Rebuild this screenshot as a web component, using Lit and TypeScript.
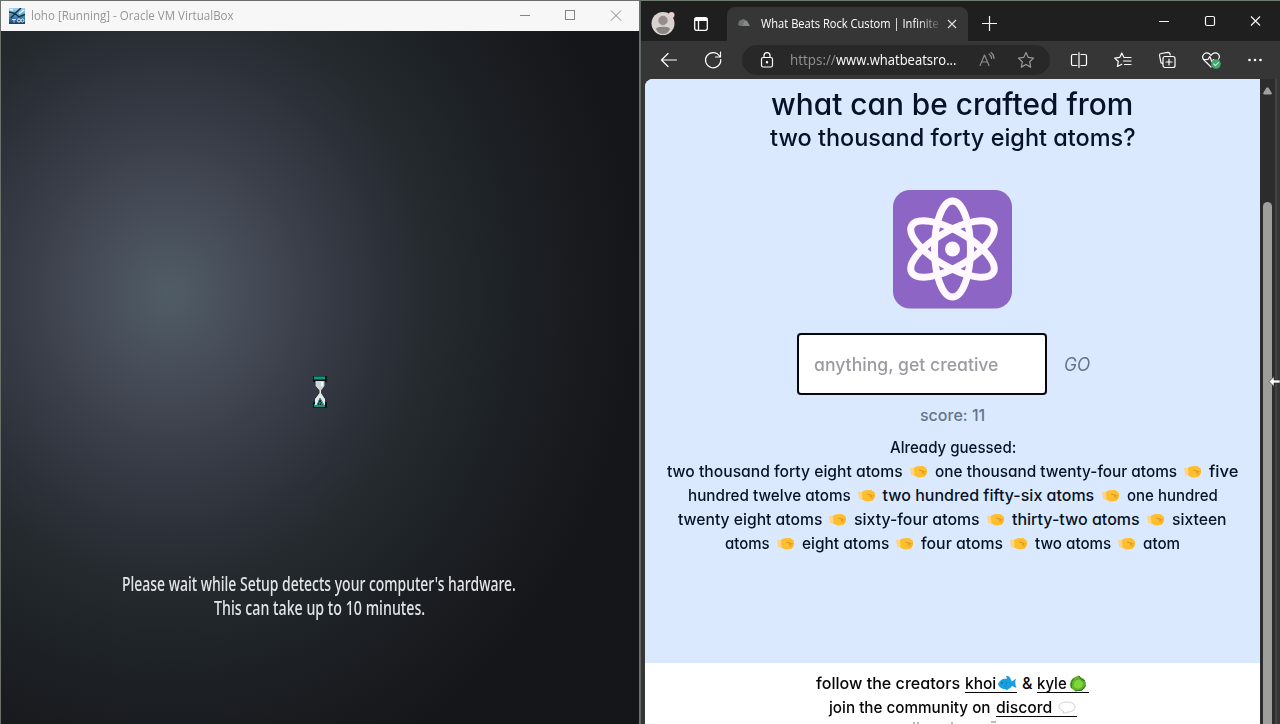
import { LitElement, html, css, svg } from "lit";
import { customElement, property, state } from "lit/decorators.js";
import { styleMap } from "lit/directives/style-map.js";

/** A single line of text, condensed or widened to occupy a given width. */
@customElement("fit-text")
class FitText extends LitElement {
  @property({ type: Number }) w = 100;
  @property() text = "";
  @state() ratio = 1;
  static styles = css`
    :host { display: inline-block; white-space: pre; flex: none; }
    .box { display: block; }
    .run { display: inline-block; transform-origin: 0 50%; }
  `;
  firstUpdated() {
    const el = this.renderRoot.querySelector(".run") as HTMLElement;
    this.ratio = this.w / el.offsetWidth;
  }
  render() {
    return html`<span class="box" style=${styleMap({ width: this.w + "px" })}><span class="run" style=${styleMap({ transform: `scaleX(${this.ratio})` })}>${this.text}</span></span>`;
  }
}

const t = (text: string, w: number) => html`<fit-text .text=${text} .w=${w}></fit-text>`;

const fist = html`<svg class="fist" width="18" height="14" viewBox="0 0 18 14">
  <path d="M.5 3.200 4 3C6 1.600 8.500.8 11 1.200c1.600-.3 3 .2 3.800 1.100 1.600.5 2.400 1.900 2.200 3.500.2 1.600-.1 3-1 3.900-.5 1.600-1.600 2.400-3.200 2.400-2.500.8-5.300.4-7.400-1.200L1.200 9.400Z" fill="#fdbf2d"/>
  <path d="M.5 3.200 4 3 4.600 10.500 1.200 9.400Z" fill="#ffd489"/>
  <path d="M9.300 5c1.500.9 3.600.6 4.600 1.700.3 1-.8 1.500-2 1.300" fill="none" stroke="#dc8420" stroke-width="1"/>
  <path d="M13.800 6.800l2.600-.3M13 9.300l2.500-.2" fill="none" stroke="#eda02a" stroke-width=".8"/>
</svg>`;

type Row = (string | number)[][];
const rows: Row[] = [
  [["two thousand forty eight atoms", 236], ["one thousand twenty-four atoms", 242], ["five", 29]],
  [["hundred twelve atoms", 163], ["two hundred fifty-six atoms", 212], ["one hundred", 91]],
  [["twenty eight atoms", 144], ["sixty-four atoms", 126], ["thirty-two atoms", 128], ["sixteen", 55]],
  [["atoms", 45], ["eight atoms", 87], ["four atoms", 82], ["two atoms", 76], ["atom", 37]],
];

const icon = (body: unknown, cls = "") =>
  html`<svg class="ic ${cls}" width="20" height="20" viewBox="0 0 20 20" fill="none" stroke="currentColor" stroke-width="1.200" stroke-linecap="round" stroke-linejoin="round">${body}</svg>`;

@customElement("vm-window")
class VmWindow extends LitElement {
  static styles = css`
    :host { display: flex; flex-direction: column; box-sizing: border-box; width: 640px; height: 724px; border: solid #6b706b; border-width: 1px 1px 0 1px; font-family: "Open Sans", "Noto Sans", sans-serif; }
    .title { display: flex; align-items: center; height: 30px; flex: none; background: #f7f7f7; color: #959595; font-size: 12px; line-height: 16px; }
    .app { margin: -1px 6px 0 8px; flex: none; }
    .ctl { flex: none; }
    .spacer { flex: 1; }
    .screen { flex: 1; display: flex; flex-direction: column; align-items: center; box-sizing: border-box; padding-top: 344px;
      background: radial-gradient(470px 520px at 168px 262px, #505c65 0%, #4b555f 8%, #454b56 18%, #3b3f4a 29%, #2f343d 42%, #252a2f 56%, #1e2327 70%, #191b1f 86%, #151619 100%); }
    .glass { margin-left: 1px; }
    .msg { margin: 163px 2px 0 0; color: #e3e6e8; font-size: 19px; font-weight: 500; line-height: 24px; display: flex; flex-direction: column; align-items: center; font-family: "Noto Sans", sans-serif; }
  `;
  render() {
    return html`
      <div class="title">
        <svg class="app" width="16" height="16" viewBox="0 0 16 16">
          <defs><linearGradient id="g" x2="0" y2="1"><stop stop-color="#a6d3ec"/><stop offset=".55" stop-color="#4989b5"/><stop offset="1" stop-color="#163c62"/></linearGradient></defs>
          <rect width="16" height="16" fill="url(#g)"/>
          <path d="M0 4 6 5.500 12 0M6 5.500 10 9 16 6.500M6 5.500 2 10" stroke="#12344f" stroke-width="1.500" fill="none"/>
          <path d="M1 1.500 4 2M10 6l5-4" stroke="#e4f6ff" stroke-width="1.500"/>
          <path d="M3 11.500h4M5 11.500v3" stroke="#cfe2ee" stroke-width="1"/><circle cx="10" cy="12.500" r="1.600" stroke="#eee" fill="none"/><circle cx="13.500" cy="12.500" r="1.500" stroke="#eee" fill="none"/>
        </svg>
        ${t("loho [Running] - Oracle VM VirtualBox", 203)}
        <div class="spacer"></div>
        <svg class="ctl" width="119" height="30" viewBox="0 0 119 30" fill="none" stroke="#858585" stroke-width="1">
          <path d="M0 14.500h10M91 9.500l10 10M101 9.500l-10 10"/><rect x="45.500" y="9.500" width="9" height="9"/>
        </svg>
      </div>
      <div class="screen">
        <svg class="glass" width="15" height="34" viewBox="0 0 15 34">
          <path d="M0 1h14v6H0zM0 27h14v6H0z" fill="#071615"/>
          <path d="M1 1.500h11v3H1zM1 29h11v3H1z" fill="#159580"/>
          <path d="M2 6h10v5L8 16v2l4 5v7H2v-7l4-5v-2L2 11Z" fill="#1b2224"/>
          <path d="M2.500 6h9v5L8 15.500H6.500L2.500 11Z" fill="#cfd4d6"/>
          <path d="M6.500 15h1.500v3L12 24v6h-2l-3-7-3 7H2v-6l4.500-6Z" fill="#e7eaeb"/>
          <path d="M4 30l3-7 4 7M6 30l1-3 2 3" stroke="#248d7e" fill="none"/>
          <path d="M9 7v4" stroke="#f7f7f7" stroke-width="2"/>
        </svg>
        <div class="msg">
          ${t("Please wait while Setup detects your computer's hardware.", 394)}
          ${t("This can take up to 10 minutes.", 211)}
        </div>
      </div>`;
  }
}

@customElement("game-page")
class GamePage extends LitElement {
  static styles = css`
    :host { display: flex; flex-direction: column; width: 615px; height: 645px; overflow: hidden; border-radius: 8px 0 0 0; background: #fff; color: #061225;
      font-family: "Comic Sans MS", Inter, "Noto Sans", sans-serif; font-feature-settings: "cv11" 1; font-weight: 450; font-size: 16px; line-height: 24px; }
    .game { height: 583.500px; flex: none; box-sizing: border-box; padding-top: 7px; background: #dbe9fe; display: flex; flex-direction: column; align-items: center; }
    .h1 { font-size: 30px; line-height: 36px; margin-right: 1px; }
    .h2 { font-size: 24px; line-height: 32px; }
    .atom { margin: 35.500px 0 24.500px; flex: none; }
    .form { display: flex; align-items: center; align-self: stretch; padding-left: 152px; gap: 17px; color: #64748b; font-size: 18px; }
    .field { box-sizing: border-box; width: 250px; height: 62px; border: 2px solid #05080d; border-radius: 4px; background: #fff; color: #9a9ca1; display: flex; align-items: center; padding: 2px 0 0 15px; }
    .go { font-style: italic; padding-top: 2px; }
    .score { margin: 8px 0; color: #64748b; height: 24px; }
    .row { display: flex; align-items: center; height: 24px; }
    .fist { margin: 1px 7px 0 7px; flex: none; }
    .foot { display: flex; flex-direction: column; align-items: center; padding-top: 8.500px; color: #050505; }
    .link { display: flex; align-items: center; border-bottom: 1px solid #050505; height: 18px; margin-left: 5px; }
    .amp { margin-left: 5px; }
    .ticks { display: block; margin: 2px 0 0 12px; }
  `;
  render() {
    const orbit = (a: number, ry = 48) => svg`<ellipse cx="59.500" cy="59" rx="18" ry="${ry}" transform="rotate(${a} 59.500 59)"/>`;
    return html`
      <div class="game">
        <div class="h1">${t("what can be crafted from", 362)}</div>
        <div class="h2">${t("two thousand forty eight atoms?", 366)}</div>
        <svg class="atom" width="119" height="119" viewBox="0 0 119 119">
          <rect width="119" height="118.500" rx="17" fill="#8d65c5"/>
          <g fill="none" stroke="#fff9ff" stroke-width="7">${orbit(0)}${orbit(60, 47)}${orbit(-60, 47)}</g>
          <circle cx="59.500" cy="59" r="7.500" fill="#fff9ff"/>
        </svg>
        <div class="form">
          <div class="field">${t("anything, get creative", 184)}</div>
          <div class="go">${t("GO", 26)}</div>
        </div>
        <div class="score">${t("score: 11", 65)}</div>
        <div class="row">${t("Already guessed:", 126)}</div>
        ${rows.map((r) => html`<div class="row">${r.map(([s, w], i) => html`${i ? fist : ""}${t(s as string, w as number)}`)}</div>`)}
      </div>
      <div class="foot">
        <div class="row">
          ${t("follow the creators", 144)}
          <div class="link">${t("khoi", 31)}<svg width="21" height="18" viewBox="0 0 21 18">
            <path d="M2 10C4 5.500 8 4 11 5l-1-3c3-.5 4.500 1.500 5 4l1 1.500L20 4.500c-1 3-1 5 .5 9.500L16 12c-1 2-3 3-4 3l-1 1.500L9 15c-3 0-6-1.500-7-5Z" fill="#199fdf"/><circle cx="6" cy="9" r=".8" fill="#075485"/><path d="M9 7c2 2 2 4 0 6" stroke="#0f86c8" fill="none"/></svg></div>
          <div class="amp">${t("&", 10)}</div>
          <div class="link">${t("kyle", 30)}<svg width="22" height="18" viewBox="0 0 22 18">
            <path d="M4 14C2 9 4 5 8 3l4-1.500 1 1.500 4 2 2 4-1 5-4 3H8Z" fill="#5fb32b"/><path d="M7 13c-1-5 2-8 6-7l3 3-1 4-4 2Z" fill="#7fd63a"/><path d="M4.500 14c-1-4 0-7 2-9M12 2l2 3 4 2M8 17l7-1 4-5" stroke="#2c7226" fill="none"/></svg></div>
        </div>
        <div class="row">
          ${t("join the community on", 162)}
          <div class="link">${t("discord ", 60)}<svg width="21" height="18" viewBox="0 0 21 18"><path d="M3 9c0-3 3-5 8-5s8 2 8 5-3 5-7 5c-2 1-4 1-5 1l.5-2C5 12.500 3 11 3 9Z" fill="#fff" stroke="#cfd1d3"/></svg></div>
        </div>
        <svg class="ticks" width="110" height="3" viewBox="0 0 110 3" stroke="#777"><path d="M10 1v2M14 1v2M48 1v2M87 1h5"/></svg>
      </div>`;
  }
}

@customElement("browser-window")
class BrowserWindow extends LitElement {
  static styles = css`
    :host { position: relative; display: flex; flex-direction: column; box-sizing: border-box; width: 640px; height: 724px; border-top: 1px solid #707a70; border-left: 1px solid #616861; background: #363636; color: #fff; font-family: "Open Sans", "Noto Sans", sans-serif; }
    .tabs { display: flex; height: 40px; flex: none; background: #1f1f1f; }
    .left { width: 86px; display: flex; align-items: center; padding: 5px 0 0 9px; box-sizing: border-box; gap: 17px; }
    .tab { width: 241px; height: 34px; margin-top: 6px; box-sizing: border-box; padding: 0 9px 0 9px; border-radius: 8px 8px 0 0; background: #363636; display: flex; align-items: center; font-size: 12px; font-weight: 500; line-height: 16px; }
    .name { margin-left: 9px; -webkit-mask-image: linear-gradient(90deg, #000 88%, transparent 102%); mask-image: linear-gradient(90deg, #000 88%, transparent 102%); }
    .x { margin-left: 8px; }
    .caps { flex: 1; display: flex; }
    .bar { display: flex; align-items: center; height: 38px; flex: none; box-sizing: border-box; padding-left: 18px; }
    .ic { flex: none; display: block; }
    .reload { margin-left: 24px; }
    .url { display: flex; align-items: center; box-sizing: border-box; margin-left: 19px; width: 308px; height: 30px; padding-left: 15px; border-radius: 15px; background: #282828; font-size: 14px; line-height: 20px; }
    .proto { margin-left: 13px; color: #929292; }
    .read { margin-left: 21px; color: #8c8c8c; }
    .star { margin-left: 19px; color: #999; }
    .tools { display: flex; gap: 24px; margin-left: 19px; }
    .body { display: flex; padding-left: 4px; height: 645px; }
    .scroll { width: 17px; box-sizing: border-box; padding: 7px 0 0 3px; background: #2b2c2b; border-right: 2px solid #444; display: flex; flex-direction: column; gap: 107px; }
    .thumb { width: 9px; flex: 1; border-radius: 5px 5px 0 0; background: #9e9f9c; }
    .cursor { position: absolute; right: 0; top: 373px; }
  `;
  render() {
    return html`
      <div class="tabs">
        <div class="left">
          <svg class="ic" width="26" height="26" viewBox="0 0 26 26"><circle cx="13" cy="12.500" r="11.500" fill="#d8d2d0"/><circle cx="13" cy="9.500" r="4.700" fill="#948d8a"/><path d="M6 18c0-3 14-3 14 0-1 3-4 5-7 5s-6-2-7-5Z" fill="#8a8582"/><circle cx="21.500" cy="4" r="3" fill="#ecccca"/></svg>
          <svg class="ic" width="16" height="16" viewBox="0 0 16 16" fill="none" stroke="#fff" stroke-width="1.300"><rect x="1.700" y="1.700" width="12.600" height="12.600" rx="2"/><path d="M2 3.500h12" stroke-width="3"/><path d="M5.500 5v9"/></svg>
        </div>
        <div class="tab">
          <svg class="ic" width="16" height="16" viewBox="0 0 16 16"><path d="M2 9 3 5l4-2 3 1 3 5-1 1H5Z" fill="#6f7471"/><path d="M8 5h3l3 5H7Z" fill="#858a87"/></svg>
          <div class="name">${t("What Beats Rock Custom | Infinite", 178)}</div>
          <svg class="ic x" width="10" height="10" viewBox="0 0 10 10" stroke="#ddd" stroke-width="1.200"><path d="M1 1l8 8M9 1 1 9"/></svg>
        </div>
        <svg class="caps" width="312" height="40" viewBox="0 0 312 40" fill="none" stroke="#f4f4f4" stroke-width="1.200">
          <path d="M14 22.500h15M21.500 15v15M191 20.500h10M283 15.500l9 9M292 15.500l-9 9"/><rect x="237.500" y="15.500" width="9" height="9" rx="1.500"/>
        </svg>
      </div>
      <div class="bar">
        ${icon(svg`<path d="M17.500 10H2.500M9 3.500 2.500 10 9 16.500"/>`)}
        ${icon(svg`<path d="M16.500 6A7.600 7.600 0 1 0 17.700 9.500M17.500 2v5h-5"/>`, "reload")}
        <div class="url">
          ${icon(svg`<rect x="4.500" y="7.500" width="11" height="9.500" rx="1.800"/><path d="M7 7.500V5.600a3 3 0 0 1 6 0v1.900"/><circle cx="10" cy="12.300" r=".6" fill="currentColor"/>`)}
          <span class="proto">${t("https://", 46)}</span>${t("www.whatbeatsro...", 120)}
          ${icon(svg`<path d="M3 15.500 7.500 5 12 15.500M4.800 12h5.500M12 4c1.500 1 2.500 2.500 2.500 4.500M14 2.500c2 1.500 3 3.500 3 6"/>`, "read")}
          ${icon(svg`<path d="M10 2.500l2.300 4.900 5.300.7-3.900 3.700 1 5.300L10 14.500l-4.700 2.600 1-5.300L2.400 8.100l5.300-.7Z"/>`, "star")}
        </div>
        <div class="tools">
          ${icon(svg`<path d="M10 2.500v15M8 4.500H4a1.500 1.500 0 0 0-1.500 1.500v8A1.500 1.500 0 0 0 4 15.500h4M12 4.500h4A1.500 1.500 0 0 1 17.500 6v8a1.500 1.500 0 0 1-1.500 1.500h-4"/>`)}
          ${icon(svg`<path d="M11 7.500 8.800 3 6.700 7.400l-5 .7 3.600 3.400-.9 5 4.400-2.300M11 7.500h7M10.500 11h7.500M11.500 14.500H18"/>`)}
          ${icon(svg`<path d="M5.500 13.500 4 12.800 2.500 5.200A1.700 1.700 0 0 1 4 3.500l7-1.200c1 0 1.700.5 2 1.700l.2 1M6 13V8.500A2 2 0 0 1 8 6.500h8a2 2 0 0 1 2 2v7a2 2 0 0 1-2 2H8a2 2 0 0 1-2-2ZM12 9v6M9 12h6"/>`)}
          ${icon(svg`<path d="M10 17 3 10C-.5 6 4 1 8.500 3.800L10 5.300l1.500-1.500C16 1 20 5.500 17.500 9M3 9.500h4l1.800-3L11 12l1.500-2.500"/><circle cx="15" cy="14" r="4.800" fill="#43a76c" stroke="none"/><path d="M12.800 14l1.600 1.600 2.900-3" stroke="#bfead0"/>`)}
          ${icon(svg`<g fill="currentColor" stroke="none"><circle cx="4.500" cy="10" r="1.300"/><circle cx="10" cy="10" r="1.300"/><circle cx="15.500" cy="10" r="1.300"/></g>`)}
        </div>
      </div>
      <div class="body">
        <game-page></game-page>
        <div class="scroll">
          <svg class="ic" width="9" height="9" viewBox="0 0 9 9"><path d="M3.500 1.500h2L9 7.500l-1 1H1l-1-1Z" fill="#a0a19f"/></svg>
          <div class="thumb"></div>
        </div>
      </div>
      <svg class="cursor" width="12" height="14" viewBox="0 0 12 14"><path d="M1 7.500 6 2.500V6h6v3H6v3.500Z" fill="#fff" stroke="#333" stroke-width=".7"/></svg>`;
  }
}

@customElement("app-root")
class AppRoot extends LitElement {
  static styles = css`
    :host { display: flex; width: 1280px; height: 724px; overflow: hidden; background: #222; }
  `;
  render() {
    return html`<vm-window></vm-window><browser-window></browser-window>`;
  }
}
